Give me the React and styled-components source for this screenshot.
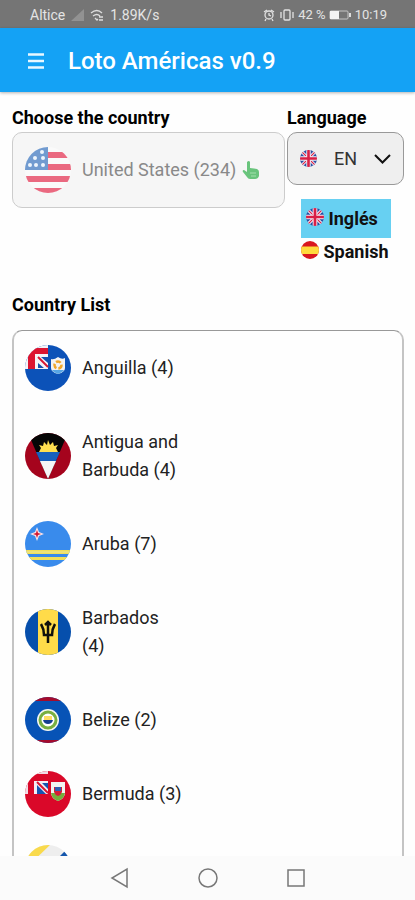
import React, { useId, useState } from "react";
import styled, { createGlobalStyle } from "styled-components";

const GlobalStyle = createGlobalStyle`
  *, *::before, *::after { box-sizing: border-box; }
  body { margin: 0; background: #fefefe; color: #111; font-family: Roboto, "Liberation Sans", sans-serif; }
  button { font: inherit; color: inherit; }
`;

const Screen = styled.div`
  display: flex;
  flex-direction: column;
  height: 100vh;
  overflow: hidden;
`;

const StatusBar = styled.div`
  flex: none;
  display: flex;
  justify-content: space-between;
  align-items: center;
  height: 28px;
  padding: 2px 28px 0 30px;
  background: #757575;
  color: #e4e4e4;
  line-height: 16px;
`;

const StatusGroup = styled.div`
  display: flex;
  align-items: center;
  gap: ${(p) => p.$gap}px;
  font-size: ${(p) => p.$text}px;
  svg { display: block; }
`;

const Header = styled.header`
  position: relative;
  flex: none;
  display: flex;
  align-items: center;
  gap: 20px;
  height: 64px;
  padding: 2px 24px 0;
  background: #14a2f5;
  color: #fff;
  box-shadow: 0 1px 3px rgba(0, 0, 0, 0.3);
`;

const MenuButton = styled.button`
  display: grid;
  place-items: center;
  width: 24px;
  height: 24px;
  padding: 0;
  border: 0;
  background: none;
`;

const Title = styled.h1`
  margin: 0;
  font-size: 24px;
  line-height: 28px;
  font-weight: 500;
`;

const Main = styled.main`
  flex: 1;
  min-height: 0;
  overflow: hidden;
  padding: 12px 11px 0 12px;
`;

const Pickers = styled.div`
  display: grid;
  grid-template-columns: 7fr 3fr;
  align-items: start;
  gap: 2px;
`;

const Label = styled.h2`
  margin: 0;
  color: #000;
  font-size: 18px;
  line-height: 28px;
  font-weight: 700;
`;

const CountryButton = styled.button`
  display: flex;
  align-items: center;
  gap: 11px;
  width: 100%;
  height: 76px;
  padding: 0 12px;
  border: 1px solid #ccc;
  border-radius: 10px;
  background: #f6f6f6;
  color: #898989;
  font-size: 18px;
  line-height: 28px;
  text-align: left;
  white-space: nowrap;
`;

const CountryValue = styled.span`
  display: flex;
  align-items: center;
  gap: 6px;
`;

const LanguageButton = styled.button`
  display: flex;
  align-items: center;
  justify-content: space-between;
  width: 100%;
  height: 53px;
  padding: 0 12px;
  border: 1px solid #999;
  border-radius: 10px;
  background: #efefef;
  color: #333;
  font-size: 18px;
`;

const LanguageOptions = styled.div`
  display: flex;
  flex-direction: column;
  align-items: stretch;
  width: 90px;
  margin: 14px auto 0;
`;

const LanguageOption = styled.button`
  display: flex;
  align-items: center;
  gap: 5px;
  height: ${(p) => (p.$active ? 39 : 28)}px;
  padding: 0 0 0 ${(p) => (p.$active ? 5 : 0)}px;
  border: 0;
  background: ${(p) => (p.$active ? "#67d0f2" : "transparent")};
  font-size: 18px;
  line-height: 28px;
  font-weight: 700;
  svg { margin-bottom: 4px; }
`;

const ListSection = styled.section`
  margin-top: 25px;
`;

const CountryList = styled.ul`
  margin: 11px 0 0;
  padding: 0;
  list-style: none;
  border: 2px solid #c4c4c4;
  border-top: 1px solid #999;
  border-radius: 10px;
`;

const CountryRow = styled.button`
  display: flex;
  align-items: center;
  gap: 11px;
  width: 100%;
  min-height: 74px;
  padding: 23px 11px;
  border: 0;
  background: none;
  color: #222;
  font-size: 18px;
  line-height: 28px;
  text-align: left;
`;

const CountryName = styled.span`
  max-width: 101px;
`;

const FlagSvg = styled.svg`
  display: block;
  flex: none;
  width: ${(p) => p.$size}px;
  height: ${(p) => p.$size}px;
  margin: ${(p) => (p.$size > 40 ? "-12px 0" : "0")};
`;

const NavBar = styled.nav`
  flex: none;
  display: flex;
  justify-content: center;
  align-items: center;
  gap: 64px;
  height: 44px;
  background: #fbfbfb;
`;

const NavButton = styled.button`
  display: block;
  width: 24px;
  height: 24px;
  padding: 0;
  border: 0;
  background: none;
  svg { display: block; }
`;

const art = {
  us: (
    <>
      <path d="M0 0h46v46H0z" fill="#fafafa" />
      <path d="M23 5h23v6H23zM23 17h23v6H23zM0 29h46v6H0zM0 41h46v5H0z" fill="#ea6980" />
      <path d="M0 0h23v23H0z" fill="#719bd0" />
      <g fill="#eef5fc">
        <circle cx="17" cy="5" r="2" /><circle cx="10" cy="11" r="2" /><circle cx="18" cy="11" r="2" />
        <circle cx="5" cy="18" r="2" /><circle cx="11" cy="18" r="2" /><circle cx="18" cy="18" r="2" />
      </g>
    </>
  ),
  uk: (
    <>
      <path d="M0 0h46v46H0z" fill="#294fa3" />
      <path d="M0 0l46 46M46 0L0 46" stroke="#f3eef5" strokeWidth="8" />
      <path d="M0 0l46 46M46 0L0 46" stroke="#d91f45" strokeWidth="3" />
      <path d="M23 0v46M0 23h46" stroke="#f3eef5" strokeWidth="12" />
      <path d="M23 0v46M0 23h46" stroke="#d91f45" strokeWidth="7" />
    </>
  ),
  spain: (
    <>
      <path d="M0 0h46v46H0z" fill="#d9171f" />
      <path d="M0 14h46v19H0z" fill="#ffda3d" />
    </>
  ),
  anguilla: (
    <>
      <path d="M0 0h46v46H0z" fill="#0c52b8" />
      <path d="M0 0h23v24H0z" fill="#f4f3f7" />
      <path d="M0 3h23v6H10v15H3V0z" fill="#dc1430" />
      <path d="M13 12h10v11H13z" fill="#f5f4f8" />
      <path d="M16 12h7v6zM13 18l6 5h-6z" fill="#164fae" />
      <path d="M13 12l10 10" stroke="#d91832" strokeWidth="2" />
      <path d="M26 14q3 1 7-2q4 3 7 1v10q0 4-7 6q-7-2-7-6z" fill="#f3f3f2" />
      <path d="M27 25h12q-1 2-6 4q-5-2-6-4" fill="#56a5e5" />
      <circle cx="33" cy="20" r="3.5" fill="none" stroke="#efa72b" strokeWidth="2.5" strokeDasharray="5 2" />
    </>
  ),
  antigua: (
    <>
      <path d="M0 0h46v46H0z" fill="#a5041d" />
      <path d="M3 0h40L23 46z" fill="#060606" />
      <path d="M14 19l2-4-2-3 4 1 1-4 3 3 1-5 2 5 3-3 1 4 4-1-2 3 2 4z" fill="#ffdf4f" />
      <path d="M11 19h24l-5 11H16z" fill="#1760bd" />
      <path d="M15 28h16l-8 18z" fill="#f6f5f6" />
    </>
  ),
  aruba: (
    <>
      <path d="M0 0h46v46H0z" fill="#398bec" />
      <path d="M0 29h46v4H0zM0 36h46v3H0z" fill="#f2df59" />
      <path d="M0 31h46" stroke="#e9e79b" />
      <path d="M12 6l2 5 5 2-5 2-2 5-2-5-5-2 5-2z" fill="#f7e3e9" />
      <path d="M12 9l1 3 3 1-3 1-1 3-1-3-3-1 3-1z" fill="#d41630" />
    </>
  ),
  barbados: (
    <>
      <path d="M0 0h46v46H0z" fill="#064fac" />
      <path d="M13 0h20v46H13z" fill="#ffdb49" />
      <path d="M16 15q3 5 3 11h8q0-6 3-11M23 13v21M20 16l3-3 3 3" fill="none" stroke="#10100c" strokeWidth="2.5" />
    </>
  ),
  belize: (
    <>
      <path d="M0 0h46v46H0z" fill="#0753b6" />
      <path d="M0 0h46v4H0zM0 43h46v3H0z" fill="#a40c2d" />
      <circle cx="23" cy="23" r="11" fill="#f5f7f1" />
      <circle cx="23" cy="23" r="8" fill="#fff" stroke="#78af41" strokeWidth="3" />
      <path d="M19 19h8v4h-8z" fill="#ffdc64" />
      <path d="M18 23h10q-1 4-5 4t-5-4" fill="#153f92" />
    </>
  ),
  bermuda: (
    <>
      <path d="M0 0h46v46H0z" fill="#da0829" />
      <path d="M0 0h23v3H0zM0 3h3v20H0z" fill="#f0dce5" />
      <path d="M9 10h14v13H9z" fill="#f4eef5" />
      <path d="M12 14l9 9h-9zM17 12h6v6z" fill="#1554b1" />
      <path d="M12 11l11 11" stroke="#d91430" strokeWidth="2" />
      <path d="M26 11h14v11q0 5-7 8q-7-3-7-8z" fill="#f2f3f1" />
      <path d="M26 22h14q-1 6-7 8q-6-2-7-8" fill="#75ad3c" />
      <path d="M29 16h8v5q-1 3-4 4q-3-1-4-4z" fill="#d61b37" />
      <path d="M30 16h6v4h-6z" fill="#315fae" />
    </>
  ),
  bonaire: (
    <>
      <path d="M0 0h46v46H0z" fill="#eeeeee" />
      <path d="M0 0h25L0 24z" fill="#f9da4c" />
      <path d="M46 0L0 46h46z" fill="#1456ac" />
    </>
  ),
};

function Flag({ kind, size = 46 }) {
  const id = useId();
  return (
    <FlagSvg viewBox="0 0 46 46" $size={size} aria-hidden="true">
      <clipPath id={id}><circle cx="23" cy="23" r="23" /></clipPath>
      <g clipPath={`url(#${id})`}>{art[kind]}</g>
    </FlagSvg>
  );
}

const countries = [
  { flag: "anguilla", name: "Anguilla (4)" },
  { flag: "antigua", name: "Antigua and Barbuda (4)" },
  { flag: "aruba", name: "Aruba (7)" },
  { flag: "barbados", name: "Barbados (4)" },
  { flag: "belize", name: "Belize (2)" },
  { flag: "bermuda", name: "Bermuda (3)" },
  { flag: "bonaire" },
];

function SignalIcons() {
  return (
    <>
      <svg width="13" height="12" viewBox="0 0 13 12"><path d="M0 12L13 0v12z" fill="#929292" /></svg>
      <svg width="14" height="12" viewBox="0 0 14 12" fill="none" stroke="#dedede" strokeWidth="1.3">
        <path d="M1 4q6-5 11 0M3 7q4-3 7 0M5 9l2 2 1-1M9 8h4M9 11h4" />
      </svg>
    </>
  );
}

function DeviceIcons() {
  return (
    <svg width="32" height="14" viewBox="0 0 32 14" fill="none" stroke="#e2e2e2" strokeWidth="1.3">
      <circle cx="6" cy="7" r="4" /><path d="M1 4l3-2M8 2l3 2M6 5v2l2 1M3 11l-1 2M9 11l1 2" />
      <rect x="21" y="2" width="6" height="10" rx="1" /><path d="M18 4v6M30 4v6" />
    </svg>
  );
}

export default function App() {
  const [language, setLanguage] = useState("EN");
  return (
    <>
      <GlobalStyle />
      <Screen>
        <StatusBar>
          <StatusGroup $gap={6} $text={14}>
            <span>Altice</span>
            <SignalIcons />
            <span>1.89K/s</span>
          </StatusGroup>
          <StatusGroup $gap={3} $text={13}>
            <DeviceIcons />
            <span>42 %</span>
            <svg width="23" height="10" viewBox="0 0 23 10">
              <rect x="1" y="1" width="18" height="8" rx="1" fill="none" stroke="#c5c5c5" />
              <path d="M1 1h9v8H1z" fill="#f5f5f5" /><path d="M21 3v4" stroke="#ddd" strokeWidth="2" />
            </svg>
            <span>10:19</span>
          </StatusGroup>
        </StatusBar>
        <Header>
          <MenuButton aria-label="Menu">
            <svg width="16" height="16" viewBox="0 0 16 16"><path d="M0 1.500h16M0 8h16M0 14.500h16" stroke="#e9f8ff" strokeWidth="2.5" /></svg>
          </MenuButton>
          <Title>Loto Américas v0.9</Title>
        </Header>
        <Main>
          <Pickers>
            <div>
              <Label id="country-label">Choose the country</Label>
              <CountryButton disabled aria-labelledby="country-label country-value">
                <Flag kind="us" />
                <CountryValue id="country-value">
                  <span>United States (234)</span>
                  <svg width="17" height="18" viewBox="0 0 17 18" aria-hidden="true">
                    <path d="M5 1q2-2 3 0v6l7 1q2 1 2 3v4q-1 3-4 3H8q-2 0-3-2L1 11q-1-2 1-2l3 2z" fill="#69c47c" />
                    <path d="M8 12h6M9 15h5" stroke="#a5e0ae" />
                  </svg>
                </CountryValue>
              </CountryButton>
            </div>
            <div>
              <Label id="language-label">Language</Label>
              <LanguageButton aria-labelledby="language-label language-value" aria-expanded="true">
                <Flag kind="uk" size={17} />
                <span id="language-value">{language}</span>
                <svg width="17" height="10" viewBox="0 0 17 10"><path d="M1 1l7.500 7.500L16 1" fill="none" stroke="#111" strokeWidth="2" /></svg>
              </LanguageButton>
              <LanguageOptions>
                <LanguageOption $active={language === "EN"} onClick={() => setLanguage("EN")}>
                  <Flag kind="uk" size={18} />
                  <span>Inglés</span>
                </LanguageOption>
                <LanguageOption $active={language === "ES"} onClick={() => setLanguage("ES")}>
                  <Flag kind="spain" size={18} />
                  <span>Spanish</span>
                </LanguageOption>
              </LanguageOptions>
            </div>
          </Pickers>
          <ListSection>
            <Label>Country List</Label>
            <CountryList>
              {countries.map((country) => (
                <li key={country.flag}>
                  <CountryRow aria-label={country.name ?? "Bonaire"}>
                    <Flag kind={country.flag} />
                    {country.name && <CountryName>{country.name}</CountryName>}
                  </CountryRow>
                </li>
              ))}
            </CountryList>
          </ListSection>
        </Main>
        <NavBar aria-label="System">
          <NavButton aria-label="Back">
            <svg width="24" height="24" viewBox="0 0 24 24" fill="none" stroke="#777" strokeWidth="1.5"><path d="M19 3v18L4 12z" /></svg>
          </NavButton>
          <NavButton aria-label="Home">
            <svg width="24" height="24" viewBox="0 0 24 24" fill="none" stroke="#777" strokeWidth="1.5"><circle cx="12" cy="12" r="9" /></svg>
          </NavButton>
          <NavButton aria-label="Recent apps">
            <svg width="24" height="24" viewBox="0 0 24 24" fill="none" stroke="#777" strokeWidth="1.5"><rect x="4" y="4" width="16" height="16" /></svg>
          </NavButton>
        </NavBar>
      </Screen>
    </>
  );
}
